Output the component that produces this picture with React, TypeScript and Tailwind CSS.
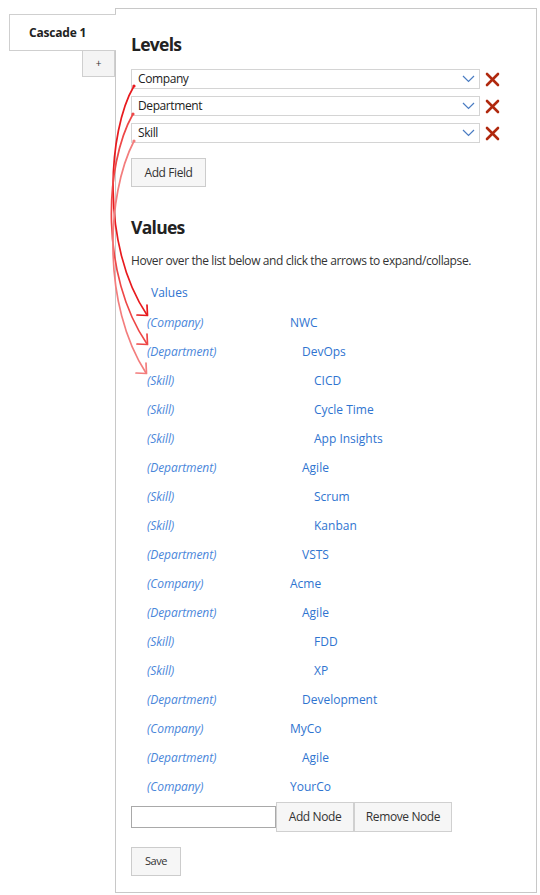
import React from "react";

const rows: { label: string; value: string; level: number }[] = [
  { label: "(Company)", value: "NWC", level: 0 },
  { label: "(Department)", value: "DevOps", level: 1 },
  { label: "(Skill)", value: "CICD", level: 2 },
  { label: "(Skill)", value: "Cycle Time", level: 2 },
  { label: "(Skill)", value: "App Insights", level: 2 },
  { label: "(Department)", value: "Agile", level: 1 },
  { label: "(Skill)", value: "Scrum", level: 2 },
  { label: "(Skill)", value: "Kanban", level: 2 },
  { label: "(Department)", value: "VSTS", level: 1 },
  { label: "(Company)", value: "Acme", level: 0 },
  { label: "(Department)", value: "Agile", level: 1 },
  { label: "(Skill)", value: "FDD", level: 2 },
  { label: "(Skill)", value: "XP", level: 2 },
  { label: "(Department)", value: "Development", level: 1 },
  { label: "(Company)", value: "MyCo", level: 0 },
  { label: "(Department)", value: "Agile", level: 1 },
  { label: "(Company)", value: "YourCo", level: 0 },
];

const levelPad = ["pl-0", "pl-[12px]", "pl-[24px]"];

function Chevron() {
  return (
    <svg width="13" height="8" viewBox="0 0 13 8" className="shrink-0">
      <polyline points="1,1 6.5,6.5 12,1" fill="none" stroke="#4a7cc2" strokeWidth="1.2" />
    </svg>
  );
}

function RedX() {
  return (
    <svg width="15" height="15" viewBox="0 0 15 15" className="shrink-0">
      <line x1="2" y1="2" x2="13" y2="13" stroke="#b0290f" strokeWidth="2.6" strokeLinecap="round" />
      <line x1="13" y1="2" x2="2" y2="13" stroke="#b0290f" strokeWidth="2.6" strokeLinecap="round" />
    </svg>
  );
}

function LevelSelect({ name }: { name: string }) {
  return (
    <div className="flex items-center gap-[5px]">
      <div className="flex h-[20px] w-[349px] items-center justify-between border border-[#d4d4d4] bg-white pl-[6px] pr-[4px] text-[12px] text-[#222]">
        <span>{name}</span>
        <Chevron />
      </div>
      <RedX />
    </div>
  );
}

function Arrows() {
  return (
    <svg
      className="pointer-events-none absolute left-0 top-0"
      width="540"
      height="895"
      viewBox="0 0 540 895"
    >
      <g fill="none" strokeWidth="1.7" strokeLinecap="round" strokeLinejoin="round">
        <path d="M134 86 C 108 130, 100 245, 147 315" stroke="#e81a1e" />
        <polyline points="147,305 147.5,315.5 137,315" stroke="#e81a1e" />
        <path d="M133 114 C 104 165, 100 275, 147 344" stroke="#ee4747" />
        <polyline points="147,334 147.5,344.5 137,344" stroke="#ee4747" />
        <path d="M134 141 C 106 195, 102 305, 146 373" stroke="#f37d7d" />
        <polyline points="146,363 146.5,373.5 136,373" stroke="#f37d7d" />
      </g>
      <circle cx="134" cy="86" r="1.6" fill="#e81a1e" />
      <circle cx="133" cy="114" r="1.6" fill="#ee4747" />
      <circle cx="134" cy="141" r="1.6" fill="#f37d7d" />
    </svg>
  );
}

export default function App() {
  return (
    <div
      className="relative h-[895px] w-[540px] bg-white tracking-[-0.4px] text-[#333]"
      style={{ fontFamily: '"Open Sans", "Noto Sans", sans-serif' }}
    >
      <div className="flex pt-[8px]">
        <div className="flex w-[115px] shrink-0 flex-col items-end pt-[6px]">
          <div className="relative z-10 -mr-px flex h-[37px] w-[107px] items-center border border-r-0 border-[#cfcfcf] bg-white pl-[19px] text-[12px] font-bold tracking-[-0.2px] text-[#222]">
            Cascade 1
          </div>
          <div className="-mt-px flex h-[27px] w-[33px] items-center justify-center border border-[#cfcfcf] bg-[#f4f4f4] text-[10px] text-[#333]">
            +
          </div>
        </div>
        <div className="h-[885px] w-[422px] border border-[#c8c8c8] pl-[15px] pt-[23px]">
          <h2 className="h-[24px] text-[17.5px] font-bold leading-[24px] tracking-[-0.7px] text-[#222]">Levels</h2>
          <div className="mt-[13px] flex flex-col gap-[7px]">
            <LevelSelect name="Company" />
            <LevelSelect name="Department" />
            <LevelSelect name="Skill" />
          </div>
          <button className="mt-[15px] flex h-[29px] w-[75px] items-center justify-center border border-[#cccccc] bg-[#f6f6f6] text-[12px] text-[#333]">
            Add Field
          </button>
          <h2 className="mt-[28px] h-[24px] text-[17.5px] font-bold leading-[24px] tracking-[-0.7px] text-[#222]">Values</h2>
          <p className="mt-[13px] h-[18px] text-[12px] leading-[18px] text-[#333]">
            Hover over the list below and click the arrows to expand/collapse.
          </p>
          <div className="mt-[13px] h-[20px] pl-[20px] text-[12px] leading-[20px] tracking-normal text-[#2f74d0]">Values</div>
          <div className="mt-[5px] flex flex-col">
            {rows.map((r, i) => (
              <div key={i} className="flex h-[29px] items-center text-[12px] tracking-normal">
                <span className="w-[159px] shrink-0 pl-[16px] italic tracking-[-0.1px] text-[#4a86da]">{r.label}</span>
                <span className={`${levelPad[r.level]} text-[#2f74d0]`}>{r.value}</span>
              </div>
            ))}
          </div>
          <div className="mt-[1px] flex items-center">
            <input className="h-[22px] w-[145px] border border-[#a9a9a9] bg-white outline-none" />
            <button className="flex h-[30px] w-[78px] items-center justify-center border border-[#d0d0d0] bg-[#f6f6f6] text-[12px] text-[#333]">
              Add Node
            </button>
            <button className="flex h-[30px] w-[98px] items-center justify-center border border-[#d0d0d0] bg-[#f6f6f6] text-[12px] text-[#333]">
              Remove Node
            </button>
          </div>
          <button className="mt-[15px] flex h-[29px] w-[50px] items-center justify-center border border-[#cccccc] bg-[#f6f6f6] text-[11px] text-[#333]">
            Save
          </button>
        </div>
      </div>
      <Arrows />
    </div>
  );
}
